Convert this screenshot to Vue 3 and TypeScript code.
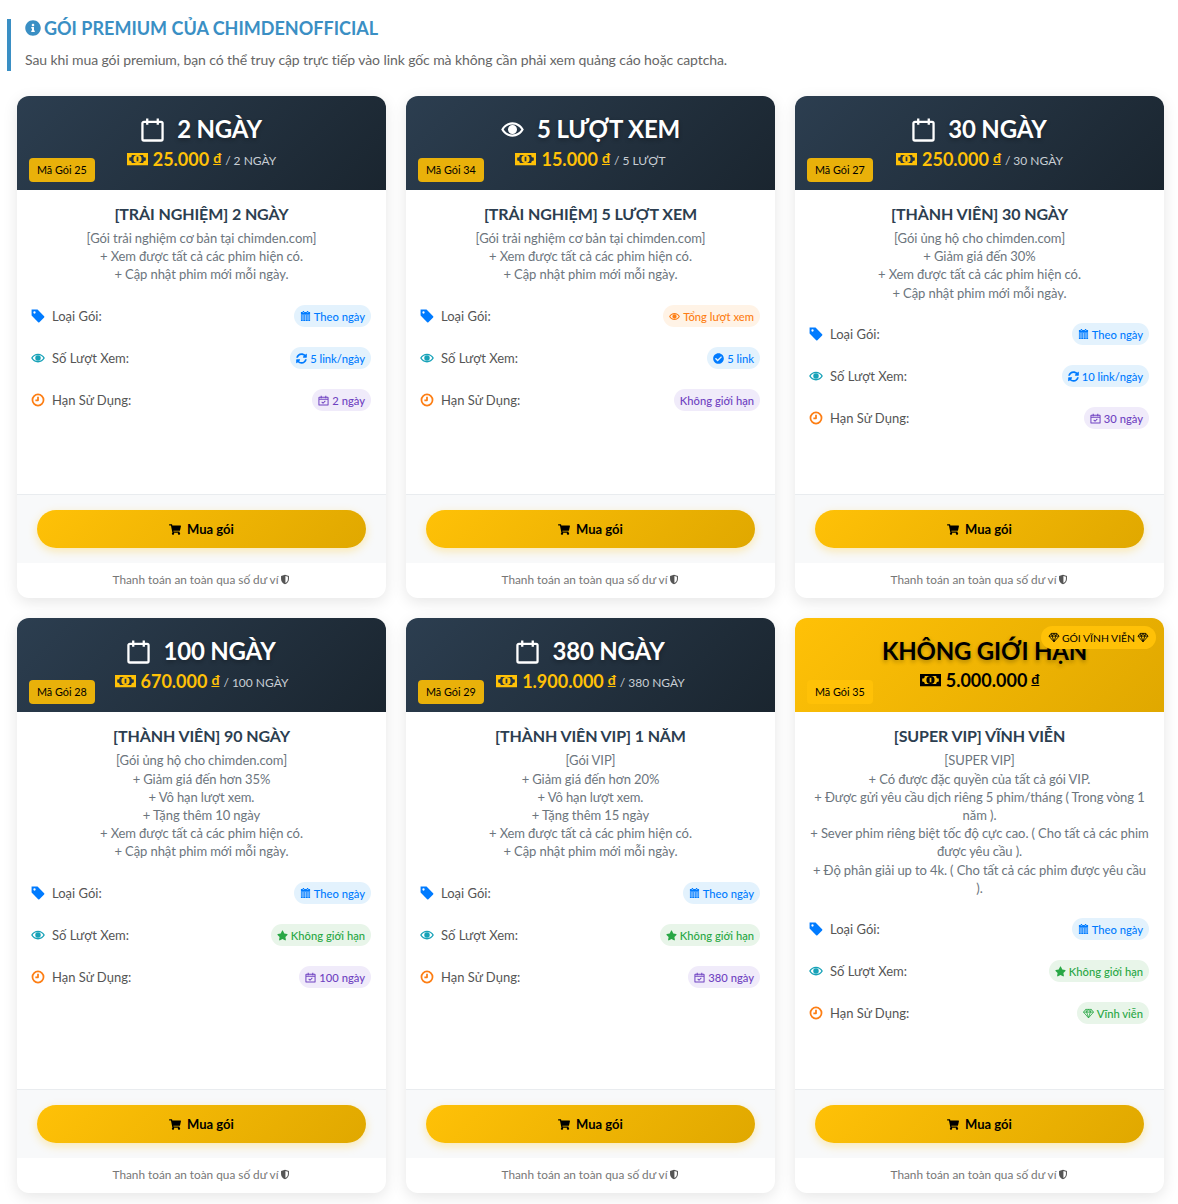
<script setup lang="ts">
interface IconDef { vb: string; d: string; stroke?: number }
interface Pill { tone: string; icon?: string; text: string }
interface Plan {
  code: number
  icon?: string
  period: string
  price: string
  unit?: string
  name: string
  desc: string[]
  kind: Pill
  views: Pill
  expiry: Pill
  vip?: boolean
}

const icons: Record<string, IconDef> = {
  info: { vb: '0 0 512 512', d: 'M256 8C119.043 8 8 119.083 8 256c0 136.997 111.043 248 248 248s248-111.003 248-248C504 119.083 392.957 8 256 8zm0 110c23.196 0 42 18.804 42 42s-18.804 42-42 42-42-18.804-42-42 18.804-42 42-42zm56 254c0 6.627-5.373 12-12 12h-88c-6.627 0-12-5.373-12-12v-24c0-6.627 5.373-12 12-12h12v-64h-12c-6.627 0-12-5.373-12-12v-24c0-6.627 5.373-12 12-12h64c6.627 0 12 5.373 12 12v100h12c6.627 0 12 5.373 12 12v24z' },
  calendarO: { vb: '0 0 24 26', stroke: 2.4, d: 'M3 5h18a1.500 1.500 0 0 1 1.500 1.500V23a1.500 1.500 0 0 1-1.500 1.500H3A1.500 1.500 0 0 1 1.500 23V6.500A1.500 1.500 0 0 1 3 5zM6.500 1.500V8M17.500 1.500V8' },
  eye: { vb: '0 0 24 24', d: 'M12 4.500C7 4.500 2.600 7.600.2 12 2.600 16.400 7 19.500 12 19.500s9.400-3.100 11.800-7.500C21.400 7.600 17 4.500 12 4.500zM12 6.800C8 6.800 4.700 9 2.800 12 4.700 15 8 17.200 12 17.200s7.300-2.200 9.200-5.200C19.300 9 16 6.800 12 6.800zM12 7.300a4.700 4.700 0 1 0 0 9.400 4.700 4.700 0 0 0 0-9.400z' },
  money: { vb: '0 0 24 15', d: 'M0 .5h24v14H0zM5.500 2.800h13a3 3 0 0 0 3 3v3.400a3 3 0 0 0-3 3h-13a3 3 0 0 0-3-3V5.800a3 3 0 0 0 3-3zM12 2.800a4.700 4.700 0 1 0 0 9.400 4.700 4.700 0 0 0 0-9.400zM11 5h2v5h-2z' },
  tag: { vb: '0 0 24 24', d: 'M1 1h10.200l11.300 11.300a1.500 1.500 0 0 1 0 2.100l-8.100 8.100a1.500 1.500 0 0 1-2.100 0L1 11.200zM6 4a2 2 0 1 0 0 4 2 2 0 0 0 0-4z' },
  clock: { vb: '0 0 24 24', stroke: 3, d: 'M12 2.500a9.500 9.500 0 1 0 0 19 9.500 9.500 0 0 0 0-19zM12 6.500v6H7.500' },
  calendar: { vb: '0 0 24 24', d: 'M6 0h3v3H6zM15 0h3v3h-3zM2 2h20v6H2zM2 9h4v3.500H2zM7 9h4.500v3.500H7zM12.500 9H17v3.500h-4.500zM18 9h4v3.500h-4zM2 13.500h4V17H2zM7 13.500h4.500V17H7zM12.500 13.500H17V17h-4.500zM18 13.500h4V17h-4zM2 18h4v4H2zM7 18h4.500v4H7zM12.500 18H17v4h-4.500zM18 18h4v4h-4z' },
  calendarCheck: { vb: '0 0 24 24', stroke: 2.2, d: 'M3 5h18a1 1 0 0 1 1 1v15a1 1 0 0 1-1 1H3a1 1 0 0 1-1-1V6a1 1 0 0 1 1-1zM7 1.500V7M17 1.500V7M2 9.500h20M8 15l3 3 5-5' },
  sync: { vb: '0 0 512 512', d: 'M370.72 133.28C339.458 104.008 298.888 87.962 255.848 88c-77.458.068-144.328 53.178-162.791 126.85-1.344 5.363-6.122 9.15-11.651 9.15H24.103c-7.498 0-13.194-6.807-11.807-14.176C33.933 94.924 134.813 8 256 8c66.448 0 126.791 26.136 171.315 68.685L463.03 40.97C478.149 25.851 504 36.559 504 57.941V192c0 13.255-10.745 24-24 24H345.941c-21.382 0-32.09-25.851-16.971-40.971l41.75-41.749zM32 296h134.059c21.382 0 32.09 25.851 16.971 40.971l-41.75 41.75c31.262 29.273 71.835 45.319 114.876 45.28 77.418-.07 144.315-53.144 162.787-126.849 1.344-5.363 6.122-9.15 11.651-9.15h57.304c7.498 0 13.194 6.807 11.807 14.176C478.067 417.076 377.187 504 256 504c-66.448 0-126.791-26.136-171.315-68.685L48.97 471.03C33.851 486.149 8 475.441 8 454.059V320c0-13.255 10.745-24 24-24z' },
  check: { vb: '0 0 512 512', d: 'M504 256c0 136.967-111.033 248-248 248S8 392.967 8 256 119.033 8 256 8s248 111.033 248 248zM227.314 387.314l184-184c6.248-6.248 6.248-16.379 0-22.627l-22.627-22.627c-6.248-6.249-16.379-6.249-22.628 0L216 308.118l-70.059-70.059c-6.248-6.248-16.379-6.248-22.628 0l-22.627 22.627c-6.248 6.248-6.248 16.379 0 22.627l104 104c6.249 6.249 16.379 6.249 22.628.001z' },
  star: { vb: '0 0 576 512', d: 'M259.3 17.8L194 150.2 47.9 171.5c-26.2 3.8-36.7 36.1-17.7 54.6l105.7 103-25 145.5c-4.5 26.3 23.2 46 46.4 33.7L288 439.6l130.7 68.7c23.2 12.2 50.9-7.4 46.4-33.7l-25-145.5 105.7-103c19-18.5 8.5-50.8-17.7-54.6L382 150.2 316.7 17.8c-11.7-23.6-45.6-23.9-57.4 0z' },
  gem: { vb: '0 0 24 24', stroke: 1.8, d: 'M6 3h12l5 6-11 12.500L1 9zM1 9h22M8 9l4 12.500L16 9M6 3l2 6 4-6 4 6 2-6' },
  cart: { vb: '0 0 576 512', d: 'M528.12 301.319l47.273-208C578.806 78.301 567.391 64 551.99 64H159.208l-9.166-44.81C147.758 8.021 137.93 0 126.529 0H24C10.745 0 0 10.745 0 24v16c0 13.255 10.745 24 24 24h69.883l70.248 343.435C147.325 417.1 136 435.222 136 456c0 30.928 25.072 56 56 56s56-25.072 56-56c0-15.674-6.447-29.835-16.824-40h209.647C430.447 426.165 424 440.326 424 456c0 30.928 25.072 56 56 56s56-25.072 56-56c0-22.172-12.888-41.332-31.579-50.405l5.517-24.276c3.413-15.018-8.002-29.319-23.403-29.319H218.117l-6.545-32h293.145c11.206 0 20.92-7.754 23.403-18.681z' },
  shield: { vb: '0 0 24 24', d: 'M12 .5L2.500 3.500V11c0 6 4 10.500 9.500 12.500 5.500-2 9.500-6.500 9.500-12.500V3.500zM13 3.500l6 2v5.500c0 4.500-2.200 7.800-6 9.600z' },
}

const byDay: Pill = { tone: 'blue', icon: 'calendar', text: 'Theo ngày' }
const unlimited: Pill = { tone: 'green', icon: 'star', text: 'Không giới hạn' }

const plans: Plan[] = [
  {
    code: 25, icon: 'calendarO', period: '2 NGÀY', price: '25.000', unit: '2 NGÀY',
    name: '[TRẢI NGHIỆM] 2 NGÀY',
    desc: ['[Gói trải nghiệm cơ bản tại chimden.com]', '+ Xem được tất cả các phim hiện có.', '+ Cập nhật phim mới mỗi ngày.'],
    kind: byDay,
    views: { tone: 'blue', icon: 'sync', text: '5 link/ngày' },
    expiry: { tone: 'purple', icon: 'calendarCheck', text: '2 ngày' },
  },
  {
    code: 34, icon: 'eye', period: '5 LƯỢT XEM', price: '15.000', unit: '5 LƯỢT',
    name: '[TRẢI NGHIỆM] 5 LƯỢT XEM',
    desc: ['[Gói trải nghiệm cơ bản tại chimden.com]', '+ Xem được tất cả các phim hiện có.', '+ Cập nhật phim mới mỗi ngày.'],
    kind: { tone: 'orange', icon: 'eye', text: 'Tổng lượt xem' },
    views: { tone: 'blue', icon: 'check', text: '5 link' },
    expiry: { tone: 'purple', text: 'Không giới hạn' },
  },
  {
    code: 27, icon: 'calendarO', period: '30 NGÀY', price: '250.000', unit: '30 NGÀY',
    name: '[THÀNH VIÊN] 30 NGÀY',
    desc: ['[Gói ủng hộ cho chimden.com]', '+ Giảm giá đến 30%', '+ Xem được tất cả các phim hiện có.', '+ Cập nhật phim mới mỗi ngày.'],
    kind: byDay,
    views: { tone: 'blue', icon: 'sync', text: '10 link/ngày' },
    expiry: { tone: 'purple', icon: 'calendarCheck', text: '30 ngày' },
  },
  {
    code: 28, icon: 'calendarO', period: '100 NGÀY', price: '670.000', unit: '100 NGÀY',
    name: '[THÀNH VIÊN] 90 NGÀY',
    desc: ['[Gói ủng hộ cho chimden.com]', '+ Giảm giá đến hơn 35%', '+ Vô hạn lượt xem.', '+ Tặng thêm 10 ngày', '+ Xem được tất cả các phim hiện có.', '+ Cập nhật phim mới mỗi ngày.'],
    kind: byDay,
    views: unlimited,
    expiry: { tone: 'purple', icon: 'calendarCheck', text: '100 ngày' },
  },
  {
    code: 29, icon: 'calendarO', period: '380 NGÀY', price: '1.900.000', unit: '380 NGÀY',
    name: '[THÀNH VIÊN VIP] 1 NĂM',
    desc: ['[Gói VIP]', '+ Giảm giá đến hơn 20%', '+ Vô hạn lượt xem.', '+ Tặng thêm 15 ngày', '+ Xem được tất cả các phim hiện có.', '+ Cập nhật phim mới mỗi ngày.'],
    kind: byDay,
    views: unlimited,
    expiry: { tone: 'purple', icon: 'calendarCheck', text: '380 ngày' },
  },
  {
    code: 35, period: 'KHÔNG GIỚI HẠN', price: '5.000.000', vip: true,
    name: '[SUPER VIP] VĨNH VIỄN',
    desc: [
      '[SUPER VIP]',
      '+ Có được đặc quyền của tất cả gói VIP.',
      '+ Được gửi yêu cầu dịch riêng 5 phim/tháng ( Trong vòng 1',
      'năm ).',
      '+ Sever phim riêng biệt tốc độ cực cao. ( Cho tất cả các phim',
      'được yêu cầu ).',
      '+ Độ phân giải up to 4k. ( Cho tất cả các phim được yêu cầu',
      ').',
    ],
    kind: byDay,
    views: unlimited,
    expiry: { tone: 'green', icon: 'gem', text: 'Vĩnh viễn' },
  },
]

function rows(p: Plan) {
  return [
    { icon: 'tag', cls: 'ic-tag', label: 'Loại Gói:', pill: p.kind },
    { icon: 'eye', cls: 'ic-eye', label: 'Số Lượt Xem:', pill: p.views },
    { icon: 'clock', cls: 'ic-clock', label: 'Hạn Sử Dụng:', pill: p.expiry },
  ]
}
</script>

<template>
  <div class="page">
    <!-- Page heading -->
    <div class="intro">
      <h2 class="intro-title">
        <svg class="ic ic-info" :viewBox="icons.info.vb"><path :d="icons.info.d" /></svg>
        GÓI PREMIUM CỦA CHIMDENOFFICIAL
      </h2>
      <p class="intro-text">Sau khi mua gói premium, bạn có thể truy cập trực tiếp vào link gốc mà không cần phải xem quảng cáo hoặc captcha.</p>
    </div>

    <div class="grid">
      <div v-for="p in plans" :key="p.code" class="card">
        <div class="head" :class="{ 'head--vip': p.vip }">
          <div v-if="p.vip" class="ribbon">
            <svg class="ic ic-gem" :viewBox="icons.gem.vb"><path class="st" :d="icons.gem.d" :stroke-width="icons.gem.stroke" /></svg>
            GÓI VĨNH VIỄN
            <svg class="ic ic-gem" :viewBox="icons.gem.vb"><path class="st" :d="icons.gem.d" :stroke-width="icons.gem.stroke" /></svg>
          </div>
          <div class="period">
            <svg v-if="p.icon" class="ic ic-period" :viewBox="icons[p.icon].vb">
              <path :class="{ st: icons[p.icon].stroke }" :d="icons[p.icon].d" :stroke-width="icons[p.icon].stroke" />
            </svg>
            <span>{{ p.period }}</span>
          </div>
          <div class="price">
            <svg class="ic ic-money" :viewBox="icons.money.vb"><path :d="icons.money.d" /></svg>
            <span class="amount">{{ p.price }}</span>
            <u class="cur">đ</u>
            <span v-if="p.unit" class="unit">/ {{ p.unit }}</span>
          </div>
          <span class="code">Mã Gói {{ p.code }}</span>
        </div>

        <div class="body">
          <h3 class="name">{{ p.name }}</h3>
          <div class="desc">
            <div v-for="line in p.desc" :key="line">{{ line }}</div>
          </div>
          <div class="rows">
            <div v-for="r in rows(p)" :key="r.label" class="row">
              <span class="row-label">
                <svg class="ic" :class="r.cls" :viewBox="icons[r.icon].vb">
                  <path :class="{ st: icons[r.icon].stroke }" :d="icons[r.icon].d" :stroke-width="icons[r.icon].stroke" />
                </svg>
                {{ r.label }}
              </span>
              <span class="pill" :class="'pill--' + r.pill.tone">
                <svg v-if="r.pill.icon" class="ic ic-pill" :viewBox="icons[r.pill.icon].vb">
                  <path :class="{ st: icons[r.pill.icon].stroke }" :d="icons[r.pill.icon].d" :stroke-width="icons[r.pill.icon].stroke" />
                </svg>
                {{ r.pill.text }}
              </span>
            </div>
          </div>
        </div>

        <div class="action">
          <button class="buy" type="button">
            <svg class="ic ic-cart" :viewBox="icons.cart.vb"><path :d="icons.cart.d" /></svg>
            Mua gói
          </button>
        </div>
        <div class="safe">
          Thanh toán an toàn qua số dư ví
          <svg class="ic ic-shield" :viewBox="icons.shield.vb"><path :d="icons.shield.d" /></svg>
        </div>
      </div>
    </div>
  </div>
</template>

<style>
body {
  background: #fff;
}
</style>

<style scoped>
.page {
  box-sizing: border-box;
  width: 1178px;
  height: 1204px;
  padding: 19px 14px 0 7px;
  font-family: Lato, "Noto Sans", sans-serif;
  color: #333;
  overflow: hidden;
}
.ic {
  fill: currentColor;
  fill-rule: evenodd;
  flex-shrink: 0;
}
.st {
  fill: none;
  stroke: currentColor;
  stroke-linejoin: round;
}

/* heading */
.intro {
  height: 52px;
  border-left: 4px solid #3a8fc4;
  padding-left: 14px;
}
.intro-title {
  margin: 0;
  display: flex;
  align-items: center;
  gap: 3px;
  font-size: 18px;
  line-height: 18px;
  font-weight: 700;
  color: #3a8fc4;
}
.ic-info {
  width: 16px;
  height: 16px;
}
.intro-text {
  margin: 13px 0 0;
  font-size: 14px;
  line-height: 20px;
  letter-spacing: -0.09px;
  color: #666;
}

.grid {
  margin: 25px 0 0 10px;
  display: grid;
  grid-template-columns: repeat(3, 369px);
  gap: 20px;
}
.card {
  display: flex;
  flex-direction: column;
  border-radius: 12px;
  background: #fff;
  box-shadow: 0 4px 15px rgba(0, 0, 0, 0.1);
  overflow: hidden;
}

/* card header */
.head {
  position: relative;
  height: 94px;
  box-sizing: border-box;
  padding-top: 16px;
  text-align: center;
  color: #fff;
  background: linear-gradient(135deg, #2c3e50, #1a252f);
}
.head--vip {
  color: #000;
  background: linear-gradient(135deg, #ffc107, #e0a800);
}
.period {
  display: flex;
  align-items: center;
  justify-content: center;
  gap: 13px;
  font-size: 24px;
  line-height: 34px;
  font-weight: 700;
  letter-spacing: -0.2px;
  text-shadow: 0 2px 4px rgba(0, 0, 0, 0.3);
}
.head--vip .period {
  padding-left: 10px;
}
.ic-period {
  width: 23px;
  height: 25px;
}
.price {
  margin-top: -1px;
  display: flex;
  align-items: center;
  justify-content: center;
  gap: 4px;
  line-height: 24px;
  color: #ffc107;
}
.head--vip .price {
  color: #000;
}
.ic-money {
  width: 21px;
  height: 14px;
  margin-right: 1px;
}
.amount {
  font-size: 18px;
  font-weight: 700;
}
.cur {
  font-size: 14px;
  font-weight: 700;
  margin-bottom: 2px;
}
.unit {
  margin-top: 4px;
  font-size: 12px;
  color: #c8ced4;
}
.code {
  position: absolute;
  left: 12px;
  bottom: 8px;
  padding: 0 8px;
  height: 24px;
  line-height: 24px;
  border-radius: 4px;
  font-size: 10.8px;
  color: #000;
  background: #e9b10a;
}
.head--vip .code {
  background: #ffc107;
}
.ribbon {
  position: absolute;
  top: 8px;
  right: 8px;
  display: flex;
  align-items: center;
  gap: 2px;
  height: 23px;
  padding: 0 7px;
  border-radius: 12px;
  font-size: 10.4px;
  background: #ffc107;
}
.ic-gem {
  width: 12px;
  height: 11px;
}

/* card body */
.body {
  flex: 1;
  padding: 14px 15px 65px;
  text-align: center;
}
.name {
  margin: 0;
  font-size: 16px;
  line-height: 20px;
  font-weight: 700;
  letter-spacing: -0.1px;
  color: #2c3e50;
}
.desc {
  margin-top: 5px;
  display: flex;
  flex-direction: column;
  align-items: center;
  font-size: 13px;
  line-height: 18.2px;
  letter-spacing: -0.04px;
  word-spacing: -0.2px;
  white-space: nowrap;
  color: #6c757d;
}
.rows {
  margin-top: 21.5px;
  display: flex;
  flex-direction: column;
  gap: 20px;
}
.row {
  display: flex;
  align-items: center;
  justify-content: space-between;
  height: 22px;
}
.row-label {
  display: flex;
  align-items: center;
  gap: 7px;
  margin-left: -1px;
  font-size: 13px;
  color: #555;
}
.row-label .ic {
  width: 14px;
  height: 14px;
}
.ic-tag { color: #007bff; }
.ic-eye { color: #17a2b8; }
.ic-clock { color: #fd7e14; }
.pill {
  display: flex;
  align-items: center;
  gap: 3px;
  height: 22px;
  padding: 0 6px;
  border-radius: 11px;
  font-size: 11.2px;
  font-weight: 500;
}
.ic-pill {
  width: 11px;
  height: 11px;
}
.pill--blue { color: #007bff; background: #e3f2fd; }
.pill--orange { color: #fd7e14; background: #fff3e6; }
.pill--purple { color: #6f42c1; background: #f0ebfa; }
.pill--green { color: #28a745; background: #e8f5e9; }

/* card footer */
.action {
  padding: 15px 20px;
  background: #f8f9fa;
  border-top: 1px solid #e9ecef;
}
.buy {
  width: 100%;
  height: 38px;
  display: flex;
  align-items: center;
  justify-content: center;
  gap: 6px;
  border: none;
  border-radius: 19px;
  font-family: inherit;
  font-size: 13px;
  font-weight: 700;
  color: #000;
  background: linear-gradient(135deg, #ffc107, #e0a800);
  box-shadow: 0 3px 10px rgba(255, 193, 7, 0.3);
  cursor: pointer;
}
.ic-cart {
  width: 12px;
  height: 11px;
}
.safe {
  box-sizing: border-box;
  height: 35px;
  padding-bottom: 2px;
  display: flex;
  align-items: center;
  justify-content: center;
  gap: 2px;
  font-size: 11.8px;
  color: #777;
}
.ic-shield {
  width: 10px;
  height: 11px;
  color: #555;
}
</style>
